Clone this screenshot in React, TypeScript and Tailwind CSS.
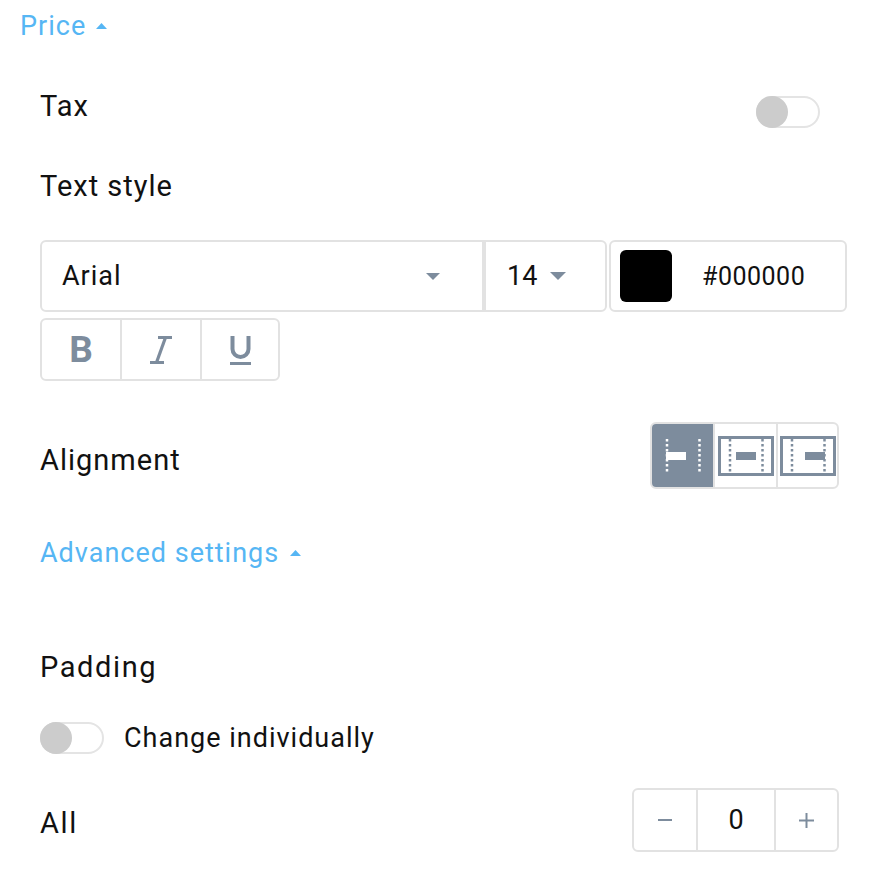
import React from "react";

const Caret = ({ up, color, w = 11, h = 6 }: { up?: boolean; color: string; w?: number; h?: number }) => (
  <svg width={w} height={h} viewBox={`0 0 ${w} ${h}`}>
    {up ? (
      <path d={`M0 ${h} L${w / 2} 0 L${w} ${h} Z`} fill={color} />
    ) : (
      <path d={`M0 0 L${w / 2} ${h} L${w} 0 Z`} fill={color} />
    )}
  </svg>
);

function Toggle() {
  return (
    <div className="relative w-[64px] h-[32px] rounded-full border-2 border-[#e4e4e4] bg-white">
      <div className="absolute left-[-2px] top-[-2px] w-[32px] h-[32px] rounded-full bg-[#cccccc]" />
    </div>
  );
}

const SLATE = "#7d8c9d";

function AlignIcon({ pos, active }: { pos: "left" | "center" | "right"; active?: boolean }) {
  const fg = active ? "#ffffff" : SLATE;
  const barX = pos === "left" ? 11 : pos === "center" ? 18 : 25;
  return (
    <svg width={56} height={40} viewBox="0 0 56 40">
      <rect x={1.5} y={1.5} width={53} height={37} fill="none" stroke={SLATE} strokeWidth={3} />
      <line x1={12} y1={3} x2={12} y2={38} stroke={fg} strokeWidth={2.5} strokeDasharray="2.5 2.5" />
      <line x1={44.5} y1={3} x2={44.5} y2={38} stroke={fg} strokeWidth={2.5} strokeDasharray="2.5 2.5" />
      <rect x={barX} y={16} width={20} height={8} fill={fg} />
    </svg>
  );
}

export default function App() {
  return (
    <div className="w-[880px] h-[874px] bg-white font-[Roboto,sans-serif] text-[#111111] px-[20px] overflow-hidden">
      <div className="h-[52px] flex items-center gap-[10px] text-[27px] tracking-[1px] text-[#56b6f4] leading-none">
        <span>Price</span>
        <Caret up color="#56b6f4" />
      </div>

      <div className="ml-[20px] w-[808px] flex flex-col">
        <div className="mt-[24px] h-[60px] flex items-center justify-between pr-[28px]">
          <span className="text-[29px] tracking-[1px] leading-none">Tax</span>
          <div className="mt-[12px]">
            <Toggle />
          </div>
        </div>

        <div className="mt-[20px] h-[60px] flex items-center">
          <span className="text-[29px] tracking-[1px] leading-none">Text style</span>
        </div>

        <div className="mt-[24px] h-[72px] flex">
          <div className="w-[444px] h-full border-2 border-[#e2e2e2] rounded-l-[6px] flex items-center justify-between pl-[20px] pr-[42px]">
            <span className="text-[27px] tracking-[1px] leading-none">Arial</span>
            <Caret color={SLATE} w={14} h={7} />
          </div>
          <div className="w-[123px] h-full border-2 border-[#e2e2e2] rounded-r-[6px] flex items-center pl-[21px] gap-[13px]">
            <span className="text-[27px] leading-none">14</span>
            <Caret color={SLATE} w={16} h={8} />
          </div>
          <div className="ml-[2px] w-[238px] h-full border-2 border-[#e2e2e2] rounded-[6px] flex items-center pl-[9px] gap-[30px]">
            <div className="w-[52px] h-[52px] rounded-[6px] bg-black" />
            <span className="text-[25px] tracking-[0.5px] leading-none">#000000</span>
          </div>
        </div>

        <div className="mt-[6px] h-[63px] w-[240px] flex border-2 border-[#e2e2e2] rounded-[6px]">
          <div className="w-[78px] flex items-center justify-center text-[37px] font-bold leading-none text-[#7d8c9d]">
            B
          </div>
          <div className="w-[80px] border-l-2 border-[#e2e2e2] flex items-center justify-center">
            <svg width={22} height={28} viewBox="0 0 22 28">
              <line x1={8} y1={1.5} x2={22} y2={1.5} stroke={SLATE} strokeWidth={3} />
              <line x1={0} y1={26.5} x2={14} y2={26.5} stroke={SLATE} strokeWidth={3} />
              <line x1={15.5} y1={1.5} x2={6.5} y2={26.5} stroke={SLATE} strokeWidth={3.2} />
            </svg>
          </div>
          <div className="flex-1 border-l-2 border-[#e2e2e2] flex items-center justify-center">
            <svg width={21} height={30} viewBox="0 0 21 30">
              <path d="M2.5 1 V14 a8 8 0 0 0 16 0 V1" fill="none" stroke={SLATE} strokeWidth={4} />
              <line x1={0} y1={28.5} x2={21} y2={28.5} stroke={SLATE} strokeWidth={3} />
            </svg>
          </div>
        </div>

        <div className="mt-[41px] h-[67px] flex items-center justify-between pr-[9px]">
          <span className="text-[29px] tracking-[1px] leading-none pt-[9px]">Alignment</span>
          <div className="h-full flex border-2 border-[#e2e2e2] rounded-[6px] overflow-hidden">
            <div className="w-[61px] bg-[#7d8c9d] flex items-center justify-center">
              <AlignIcon pos="left" active />
            </div>
            <div className="w-[63px] border-l-2 border-[#e2e2e2] flex items-center justify-center">
              <AlignIcon pos="center" />
            </div>
            <div className="w-[61px] border-l-2 border-[#e2e2e2] flex items-center justify-center">
              <AlignIcon pos="right" />
            </div>
          </div>
        </div>

        <div className="mt-[40px] h-[48px] flex items-center gap-[11px] text-[27px] tracking-[1px] text-[#56b6f4] leading-none">
          <span>Advanced settings</span>
          <Caret up color="#56b6f4" />
        </div>

        <div className="mt-[60px] h-[60px] flex items-center">
          <span className="text-[29px] tracking-[1.6px] leading-none">Padding</span>
        </div>

        <div className="mt-[25px] h-[32px] flex items-center gap-[20px]">
          <Toggle />
          <span className="text-[27px] tracking-[1px] leading-none">Change individually</span>
        </div>

        <div className="mt-[34px] h-[64px] flex items-center justify-between pr-[9px]">
          <span className="text-[29px] tracking-[1.6px] leading-none pt-[6px]">All</span>
          <div className="h-full flex border-2 border-[#e2e2e2] rounded-[6px]">
            <div className="w-[62px] flex items-center justify-center">
              <div className="w-[14px] h-[2px] bg-[#7d8c9d]" />
            </div>
            <div className="w-[78px] border-l-2 border-[#e2e2e2] flex items-center justify-center text-[27px] leading-none">
              0
            </div>
            <div className="w-[63px] border-l-2 border-[#e2e2e2] flex items-center justify-center">
              <svg width={15} height={15} viewBox="0 0 15 15">
                <line x1={0} y1={7.5} x2={15} y2={7.5} stroke={SLATE} strokeWidth={2} />
                <line x1={7.5} y1={0} x2={7.5} y2={15} stroke={SLATE} strokeWidth={2} />
              </svg>
            </div>
          </div>
        </div>
      </div>
    </div>
  );
}
